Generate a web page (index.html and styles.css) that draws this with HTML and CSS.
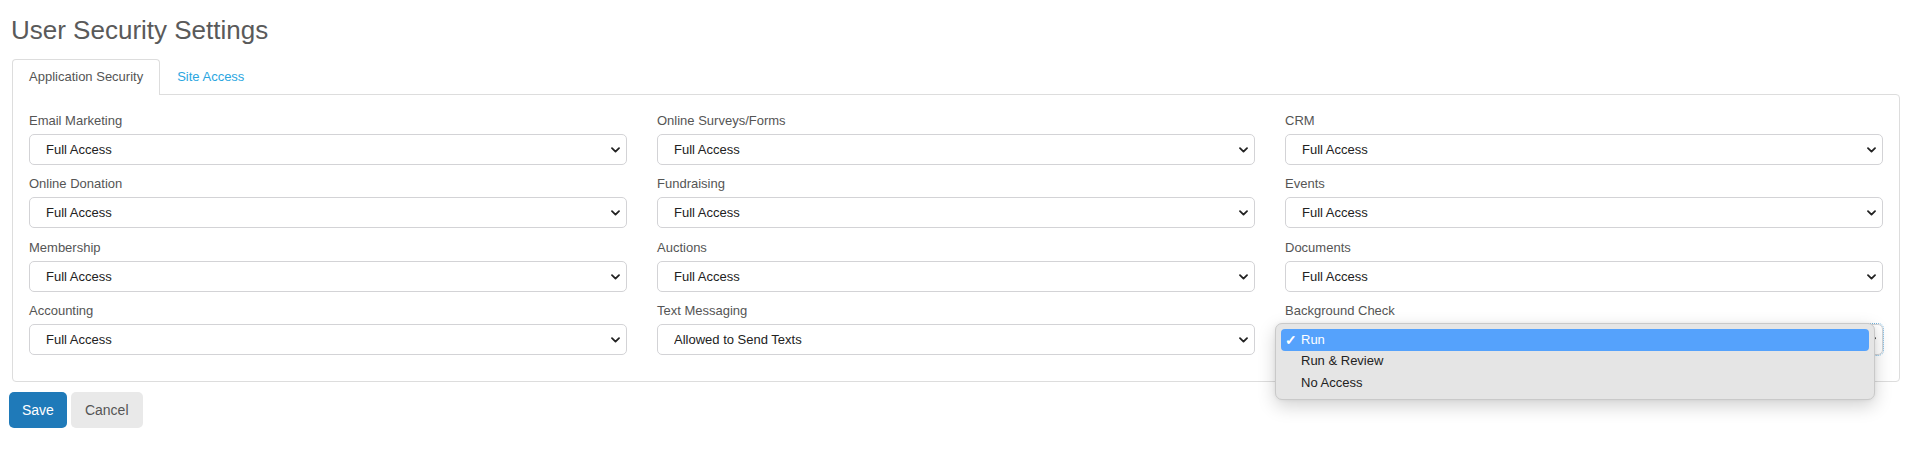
FILE: index.html
```html
<!DOCTYPE html>
<html lang="en">
<head>
<meta charset="utf-8">
<title>User Security Settings</title>
<link rel="stylesheet" href="styles.css">
</head>
<body>
<div class="page">
  <h1 class="title">User Security Settings</h1>
  <div class="tabs">
    <div class="tab tab-active">Application Security</div>
    <div class="tab tab-link">Site Access</div>
  </div>
  <div class="panel">
    <div class="grid">
      <div class="field">
        <label class="label">Email Marketing</label>
        <div class="select-wrap">
          <select class="select"><option>Full Access</option></select>
          <svg class="chev" width="9" height="6" viewBox="0 0 9 6"><path d="M1 1.2 L4.5 4.6 L8 1.2" fill="none" stroke="#222" stroke-width="1.8" stroke-linecap="round" stroke-linejoin="round"/></svg>
        </div>
      </div>
      <div class="field">
        <label class="label">Online Surveys/Forms</label>
        <div class="select-wrap">
          <select class="select"><option>Full Access</option></select>
          <svg class="chev" width="9" height="6" viewBox="0 0 9 6"><path d="M1 1.2 L4.5 4.6 L8 1.2" fill="none" stroke="#222" stroke-width="1.8" stroke-linecap="round" stroke-linejoin="round"/></svg>
        </div>
      </div>
      <div class="field">
        <label class="label">CRM</label>
        <div class="select-wrap">
          <select class="select"><option>Full Access</option></select>
          <svg class="chev" width="9" height="6" viewBox="0 0 9 6"><path d="M1 1.2 L4.5 4.6 L8 1.2" fill="none" stroke="#222" stroke-width="1.8" stroke-linecap="round" stroke-linejoin="round"/></svg>
        </div>
      </div>

      <div class="field">
        <label class="label">Online Donation</label>
        <div class="select-wrap">
          <select class="select"><option>Full Access</option></select>
          <svg class="chev" width="9" height="6" viewBox="0 0 9 6"><path d="M1 1.2 L4.5 4.6 L8 1.2" fill="none" stroke="#222" stroke-width="1.8" stroke-linecap="round" stroke-linejoin="round"/></svg>
        </div>
      </div>
      <div class="field">
        <label class="label">Fundraising</label>
        <div class="select-wrap">
          <select class="select"><option>Full Access</option></select>
          <svg class="chev" width="9" height="6" viewBox="0 0 9 6"><path d="M1 1.2 L4.5 4.6 L8 1.2" fill="none" stroke="#222" stroke-width="1.8" stroke-linecap="round" stroke-linejoin="round"/></svg>
        </div>
      </div>
      <div class="field">
        <label class="label">Events</label>
        <div class="select-wrap">
          <select class="select"><option>Full Access</option></select>
          <svg class="chev" width="9" height="6" viewBox="0 0 9 6"><path d="M1 1.2 L4.5 4.6 L8 1.2" fill="none" stroke="#222" stroke-width="1.8" stroke-linecap="round" stroke-linejoin="round"/></svg>
        </div>
      </div>

      <div class="field">
        <label class="label">Membership</label>
        <div class="select-wrap">
          <select class="select"><option>Full Access</option></select>
          <svg class="chev" width="9" height="6" viewBox="0 0 9 6"><path d="M1 1.2 L4.5 4.6 L8 1.2" fill="none" stroke="#222" stroke-width="1.8" stroke-linecap="round" stroke-linejoin="round"/></svg>
        </div>
      </div>
      <div class="field">
        <label class="label">Auctions</label>
        <div class="select-wrap">
          <select class="select"><option>Full Access</option></select>
          <svg class="chev" width="9" height="6" viewBox="0 0 9 6"><path d="M1 1.2 L4.5 4.6 L8 1.2" fill="none" stroke="#222" stroke-width="1.8" stroke-linecap="round" stroke-linejoin="round"/></svg>
        </div>
      </div>
      <div class="field">
        <label class="label">Documents</label>
        <div class="select-wrap">
          <select class="select"><option>Full Access</option></select>
          <svg class="chev" width="9" height="6" viewBox="0 0 9 6"><path d="M1 1.2 L4.5 4.6 L8 1.2" fill="none" stroke="#222" stroke-width="1.8" stroke-linecap="round" stroke-linejoin="round"/></svg>
        </div>
      </div>

      <div class="field">
        <label class="label">Accounting</label>
        <div class="select-wrap">
          <select class="select"><option>Full Access</option></select>
          <svg class="chev" width="9" height="6" viewBox="0 0 9 6"><path d="M1 1.2 L4.5 4.6 L8 1.2" fill="none" stroke="#222" stroke-width="1.8" stroke-linecap="round" stroke-linejoin="round"/></svg>
        </div>
      </div>
      <div class="field">
        <label class="label">Text Messaging</label>
        <div class="select-wrap">
          <select class="select"><option>Allowed to Send Texts</option></select>
          <svg class="chev" width="9" height="6" viewBox="0 0 9 6"><path d="M1 1.2 L4.5 4.6 L8 1.2" fill="none" stroke="#222" stroke-width="1.8" stroke-linecap="round" stroke-linejoin="round"/></svg>
        </div>
      </div>
      <div class="field">
        <label class="label">Background Check</label>
        <div class="select-wrap">
          <select class="select select-focus"><option>Run</option></select>
          <svg class="chev" width="9" height="6" viewBox="0 0 9 6"><path d="M1 1.2 L4.5 4.6 L8 1.2" fill="none" stroke="#222" stroke-width="1.8" stroke-linecap="round" stroke-linejoin="round"/></svg>
          <div class="popup">
            <div class="popup-item popup-item-selected"><span class="check">✓</span>Run</div>
            <div class="popup-item">Run &amp; Review</div>
            <div class="popup-item">No Access</div>
          </div>
        </div>
      </div>
    </div>
  </div>
  <div class="actions">
    <button class="btn btn-primary">Save</button>
    <button class="btn btn-default">Cancel</button>
  </div>
</div>
</body>
</html>
```
FILE: styles.css
```css
html, body {
  margin: 0;
  padding: 0;
  background: #ffffff;
}

body {
  font-family: "Liberation Sans", Arial, Helvetica, sans-serif;
  color: #555555;
}

.page {
  padding: 0 7px 0 12px;
}

.title {
  margin: 15px 0 14px -1px;
  font-size: 26px;
  line-height: 30px;
  font-weight: normal;
  color: #5a5a5a;
}

.tabs {
  display: flex;
  position: relative;
  z-index: 2;
}

.tab {
  font-size: 13px;
  line-height: 18px;
  padding: 8px 16px 9px;
  border: 1px solid transparent;
  border-bottom: none;
  border-radius: 4px 4px 0 0;
}

.tab-active {
  background: #ffffff;
  border-color: #dddddd;
  color: #555555;
}

.tab-link {
  color: #2aa6df;
}

.panel {
  margin-top: -1px;
  border: 1px solid #dddddd;
  border-radius: 0 4px 4px 4px;
  padding: 17px 16px 26px;
  position: relative;
  z-index: 1;
}

.grid {
  display: grid;
  grid-template-columns: repeat(3, 1fr);
  column-gap: 30px;
  row-gap: 10.33px;
}

.field {
  display: flex;
  flex-direction: column;
}

.label {
  font-size: 13px;
  line-height: 18px;
  color: #555555;
  margin-bottom: 4px;
}

.select-wrap {
  position: relative;
  height: 31px;
}

.select {
  appearance: none;
  -webkit-appearance: none;
  display: block;
  width: 100%;
  height: 31px;
  box-sizing: border-box;
  margin: 0;
  padding: 0 30px 0 16px;
  border: 1px solid #d3d3d6;
  border-radius: 5px;
  background: #ffffff;
  font-family: "Liberation Sans", Arial, Helvetica, sans-serif;
  font-size: 13px;
  color: #222222;
}

.select-focus {
  outline: 1px dotted #6fb1db;
  outline-offset: 0;
}

.chev {
  position: absolute;
  right: 7px;
  top: 13px;
}

.popup {
  position: absolute;
  left: -10px;
  top: -1px;
  width: 600px;
  height: 77px;
  box-sizing: border-box;
  padding: 5px 5px 0 5px;
  background: #e5e5e5;
  border: 1px solid #c9c9c9;
  border-radius: 7px;
  box-shadow: 0 6px 18px rgba(0, 0, 0, 0.18), 0 0 4px rgba(0, 0, 0, 0.06);
  z-index: 5;
}

.popup-item {
  height: 21.5px;
  line-height: 22px;
  padding-left: 20px;
  font-size: 13px;
  color: #222222;
  border-radius: 4px;
  position: relative;
}

.popup-item-selected {
  background: #55a2fc;
  color: #ffffff;
  height: 22px;
  line-height: 22px;
  margin-bottom: -0.5px;
}

.check {
  position: absolute;
  left: 4px;
  top: 0;
  font-size: 14px;
  font-weight: bold;
  color: #ffffff;
}

.actions {
  display: flex;
  gap: 4px;
  margin: 10px 0 0 -3px;
}

.btn {
  height: 36px;
  padding: 0 13px;
  border: none;
  border-radius: 5px;
  font-family: "Liberation Sans", Arial, Helvetica, sans-serif;
  font-size: 14px;
  line-height: 36px;
}

.btn-primary {
  background: #1f7ab9;
  color: #ffffff;
}

.btn-default {
  background: #e9e9e9;
  color: #555555;
  padding: 0 14px;
}
```
